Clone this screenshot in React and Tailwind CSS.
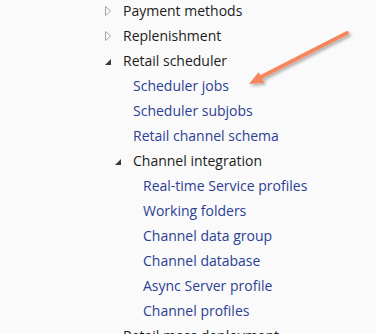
import React from 'react';

const rows = [
  { label: 'Payment methods', level: 0, kind: 'collapsed' },
  { label: 'Replenishment', level: 0, kind: 'collapsed' },
  { label: 'Retail scheduler', level: 0, kind: 'expanded' },
  { label: 'Scheduler jobs', level: 1, kind: 'link' },
  { label: 'Scheduler subjobs', level: 1, kind: 'link' },
  { label: 'Retail channel schema', level: 1, kind: 'link' },
  { label: 'Channel integration', level: 1, kind: 'expanded' },
  { label: 'Real-time Service profiles', level: 2, kind: 'link' },
  { label: 'Working folders', level: 2, kind: 'link' },
  { label: 'Channel data group', level: 2, kind: 'link' },
  { label: 'Channel database', level: 2, kind: 'link' },
  { label: 'Async Server profile', level: 2, kind: 'link' },
  { label: 'Channel profiles', level: 2, kind: 'link' },
  { label: 'Retail mass deployment', level: 0, kind: 'expanded' },
];

const indent = ['pl-[103px]', 'pl-[113px]', 'pl-[123px]'];

const Toggle = ({ kind }) => {
  if (kind === 'collapsed') {
    return (
      <svg width="20" height="12" viewBox="0 0 20 12" className="shrink-0">
        <path d="M2.5 1.5 L7.5 6 L2.5 10.5 Z" fill="none" stroke="#a6a6a6" strokeWidth="1" />
      </svg>
    );
  }
  if (kind === 'expanded') {
    return (
      <svg width="20" height="12" viewBox="0 0 20 12" className="shrink-0">
        <path d="M8 4 L8 10 L2 10 Z" fill="#3a3a3a" />
      </svg>
    );
  }
  return <span className="w-[20px] shrink-0" />;
};

export default function App() {
  return (
    <div className="relative w-[376px] h-[334px] overflow-hidden bg-[#fafafa] font-['Segoe_UI','Open_Sans',sans-serif]">
      <div className="flex flex-col -mt-[2px]">
        {rows.map((r, i) => (
          <div key={i} className={`flex items-center h-[25px] ${indent[r.level]}`}>
            <Toggle kind={r.kind} />
            <span
              className={`text-[14px] leading-none whitespace-nowrap ${
                r.kind === 'link' ? 'text-[#2b3f94]' : 'text-[#1c1c1c]'
              }`}
            >
              {r.label}
            </span>
          </div>
        ))}
      </div>

      {/* callout arrow */}
      <svg className="absolute left-0 top-0" width="376" height="334" viewBox="0 0 376 334">
        <defs>
          <filter id="sh" x="-20%" y="-20%" width="140%" height="140%">
            <feDropShadow dx="2" dy="2" stdDeviation="1.5" floodColor="#000" floodOpacity="0.3" />
          </filter>
        </defs>
        <g filter="url(#sh)">
          <line x1="347" y1="33" x2="259" y2="78" stroke="#f5855c" strokeWidth="4" strokeLinecap="round" />
          <path d="M249 84 L258.6 72.2 L264.2 82.8 Z" fill="#f5855c" />
        </g>
      </svg>
    </div>
  );
}
